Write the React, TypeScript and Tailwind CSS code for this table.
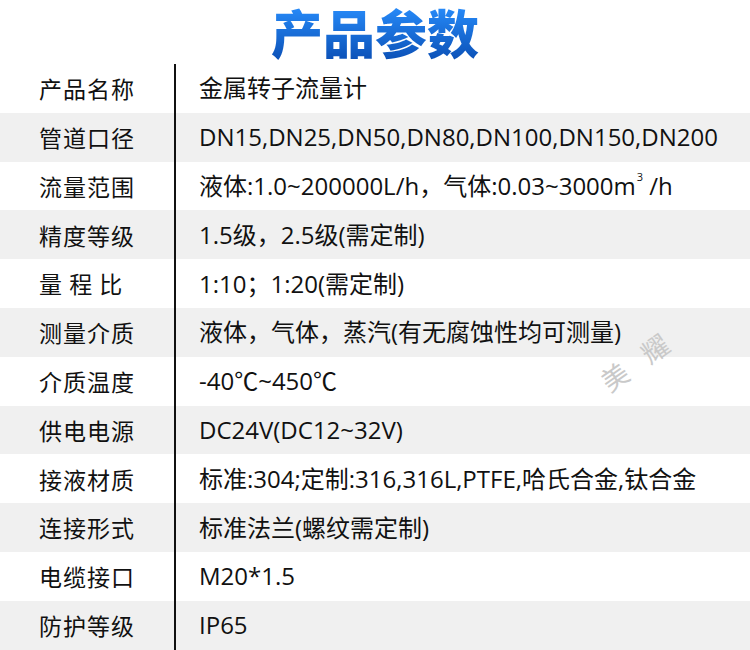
import React from "react";

const rows: { label: string; value: React.ReactNode }[] = [
  { label: "产品名称", value: "金属转子流量计" },
  { label: "管道口径", value: "DN15,DN25,DN50,DN80,DN100,DN150,DN200" },
  {
    label: "流量范围",
    value: (
      <>
        液体:1.0~200000L/h，气体:0.03~3000m
        <span className="inline-block text-[11px] leading-none align-top relative top-[3px] ml-[1px]">3</span> /h
      </>
    ),
  },
  { label: "精度等级", value: "1.5级，2.5级(需定制)" },
  { label: "量 程 比", value: "1:10；1:20(需定制)" },
  { label: "测量介质", value: "液体，气体，蒸汽(有无腐蚀性均可测量)" },
  { label: "介质温度", value: "-40℃~450℃" },
  { label: "供电电源", value: "DC24V(DC12~32V)" },
  { label: "接液材质", value: "标准:304;定制:316,316L,PTFE,哈氏合金,钛合金" },
  { label: "连接形式", value: "标准法兰(螺纹需定制)" },
  { label: "电缆接口", value: "M20*1.5" },
  { label: "防护等级", value: "IP65" },
];

export default function App() {
  return (
    <div
      className="relative w-[750px] h-[650px] overflow-hidden bg-white text-[#111]"
      style={{ fontFamily: '"Noto Sans CJK SC", "Noto Sans", sans-serif' }}
    >
      <div className="h-[64px] flex items-center justify-center">
        <h1 className="text-[52px] leading-[60px] font-black bg-gradient-to-b from-[#2a90ff] to-[#0b4fb5] bg-clip-text text-transparent">
          产品参数
        </h1>
      </div>
      <div className="flex flex-col">
        {rows.map((r, i) => (
          <div
            key={i}
            className={`flex h-[48.8px] ${i % 2 === 1 ? "bg-[#f0f0f0]" : "bg-white"}`}
          >
            <div className="w-[176px] shrink-0 border-r-2 border-[#111] flex items-center pl-[39px] text-[23px] tracking-[1px] whitespace-pre">
              {r.label}
            </div>
            <div
              className="flex-1 flex items-center pl-[23px] text-[24px] whitespace-nowrap"
              style={{ fontFamily: '"Open Sans", "Noto Sans CJK SC", sans-serif' }}
            >
              <span>{r.value}</span>
            </div>
          </div>
        ))}
      </div>
      <div className="absolute left-[596px] top-[340px] -rotate-[35deg] text-[#c9c9c9] text-[27px] tracking-[8px] pointer-events-none">
        美 耀
      </div>
    </div>
  );
}
